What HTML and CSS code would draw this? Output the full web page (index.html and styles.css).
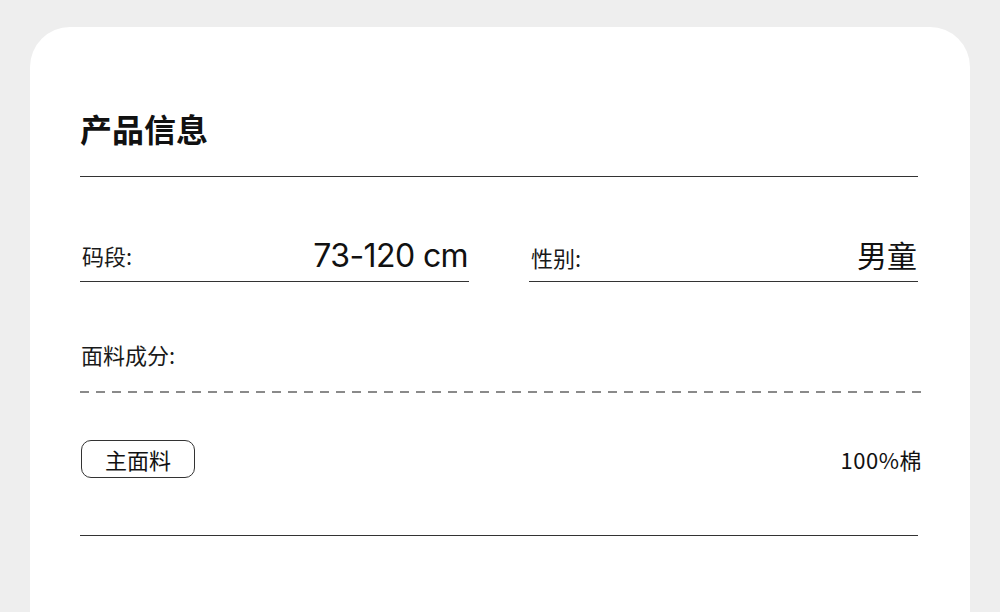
FILE: index.html
```html
<!DOCTYPE html>
<html lang="zh-CN">
<head>
<meta charset="utf-8">
<title>产品信息</title>
<link rel="stylesheet" href="styles.css">
</head>
<body>
<main class="card">
  <h1 class="title">产品信息</h1>
  <div class="specs">
    <div class="spec">
      <span class="spec-label">码段:</span>
      <span class="spec-value spec-value--latin">73-120 cm</span>
    </div>
    <div class="spec">
      <span class="spec-label">性别:</span>
      <span class="spec-value">男童</span>
    </div>
  </div>
  <section class="fabric">
    <div class="fabric-label">面料成分:</div>
    <div class="fabric-row">
      <span class="pill">主面料</span>
      <span class="fabric-value">100%棉</span>
    </div>
  </section>
</main>
</body>
</html>
```

FILE: styles.css
```css
html, body {
  margin: 0;
  padding: 0;
  background: #eeeeee;
  overflow: hidden;
  height: 612px;
}

body {
  font-family: "Noto Sans CJK SC", "Noto Sans", sans-serif;
  color: #1a1a1a;
}

.card {
  margin: 27px 0 0 30px;
  width: 940px;
  height: 585px;
  box-sizing: border-box;
  background: #ffffff;
  border-radius: 40px 40px 0 0;
  padding: 85px 52px 0 50px;
}

.title {
  margin: 0;
  font-size: 32px;
  line-height: 32px;
  font-weight: 700;
  color: #111;
  padding-bottom: 32px;
  border-bottom: 1px solid #333;
}

.specs {
  display: grid;
  grid-template-columns: 389px 389px;
  column-gap: 60px;
  margin-top: 60px;
}

.spec {
  display: flex;
  justify-content: space-between;
  align-items: baseline;
  border-bottom: 1px solid #333;
  padding: 0 1px 10px 2px;
}

.spec-label {
  font-size: 22px;
  line-height: 24px;
  color: #1a1a1a;
}

.spec-value {
  font-size: 30px;
  line-height: 34px;
  color: #111;
}

.spec-value--latin {
  font-family: "Inter", "Noto Sans", sans-serif;
  font-size: 32px;
  letter-spacing: -0.6px;
  position: relative;
  top: 2px;
}

.fabric {
  margin-top: 60px;
}

.fabric-label {
  font-size: 22px;
  line-height: 24px;
  padding-left: 1px;
}

.fabric-row {
  display: flex;
  justify-content: space-between;
  align-items: center;
  margin: 25px -4px 0 0;
  padding: 49px 0 58px 1px;
  background-image: linear-gradient(to right, #8a8a8a 0 9px, transparent 9px 16px);
  background-size: 16px 2px;
  background-repeat: repeat-x;
  background-position: 0 0;
  position: relative;
}

.fabric-row::after {
  content: "";
  position: absolute;
  left: 0;
  right: 4px;
  bottom: 0;
  border-bottom: 1px solid #333;
}

.pill {
  display: inline-flex;
  align-items: center;
  justify-content: center;
  width: 114px;
  height: 38px;
  box-sizing: border-box;
  border: 1px solid #333;
  border-radius: 10px;
  font-size: 22px;
  line-height: 1;
  color: #111;
}

.fabric-value {
  font-size: 22px;
  line-height: 24px;
  letter-spacing: 0.5px;
  color: #111;
}
```
